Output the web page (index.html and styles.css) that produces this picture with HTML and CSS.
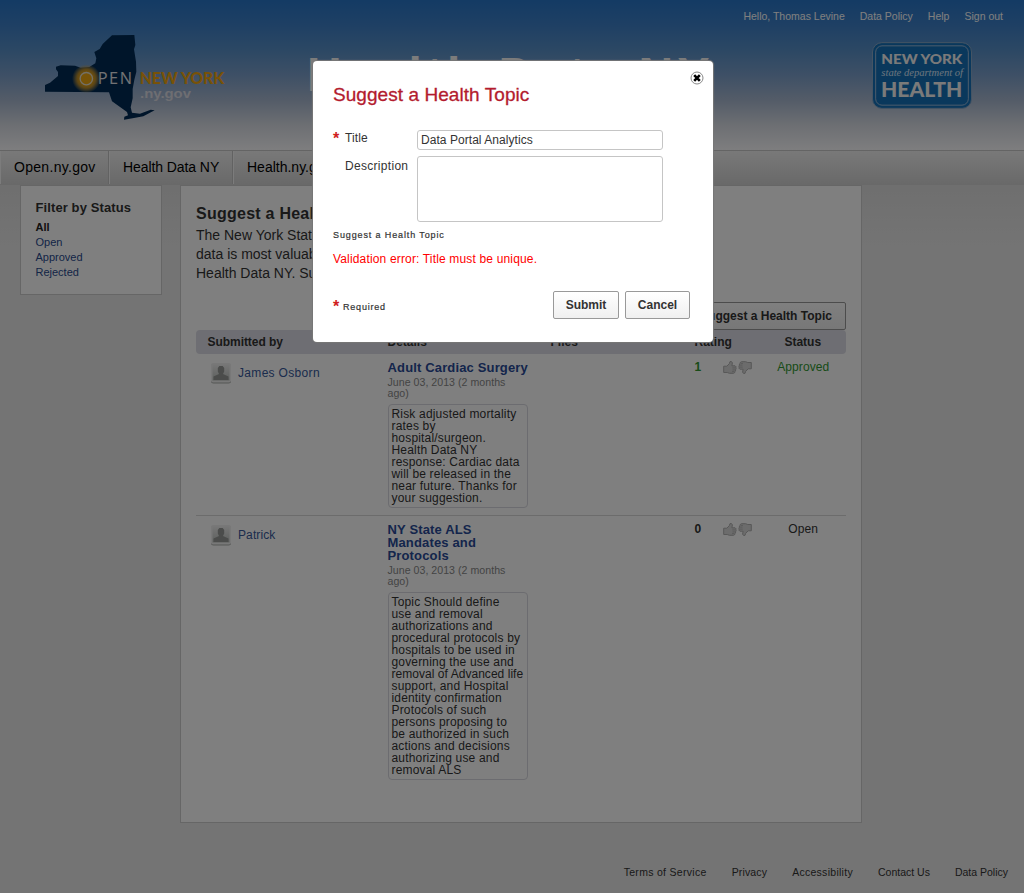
FILE: index.html
```html
<!DOCTYPE html>
<html lang="en">
<head>
<meta charset="utf-8">
<title>Suggest a Health Topic</title>
<link rel="stylesheet" href="styles.css">
</head>
<body>
<svg class="defs" width="0" height="0" aria-hidden="true">
  <symbol id="thumb" viewBox="0 0 14 13"><path d="M.7 5.2h3.1L6.3 2.7 7 .6h1.5l.9 1.2-.5 3h3.2l1.1 1.1-.5 1 .5 1-.8 1 .3 1-.9.7v.9l-1.2.8H6.4L4.2 11.5H.7z" fill="#d8d8d8" stroke="#b0b0b0"/><path d="M9.3 6.9h2.8M9.500 8.900h2.400M9 10.600h2.200" fill="none" stroke="#b8b8b8"/></symbol>
  <symbol id="person" viewBox="0 0 22 22"><rect x="1" y="2" width="20" height="19.500" rx="2.500" fill="#aaadaa"/><rect x="1" y="1" width="20" height="19.500" rx="2" fill="#f0f0f0"/><rect x="2.500" y="2.500" width="17" height="16" fill="url(#shade)"/><path d="M3.500 18v-3.500l5.500-2.500-1.200-2.500v-3.500l1.500-2h3.400l1.500 2v3.500l-1.200 2.500 5.500 2.500v3.500z" fill="#969996"/></symbol>
  <linearGradient id="shade" x2="0" y2="1"><stop stop-color="#eee"/><stop offset="1" stop-color="#bcc0bd"/></linearGradient>
</svg>
<div class="page">
  <header class="masthead">
    <svg class="state-logo" viewBox="0 0 630 330">
      <defs><radialGradient id="sun"><stop offset=".4" stop-color="#f0a810"/><stop offset=".65" stop-color="#c89428" stop-opacity=".9"/><stop offset="1" stop-color="#c8a050" stop-opacity="0"/></radialGradient></defs>
      <path d="M45 215V195L60 188 84 168V156L78 148V140L92 136 135 137 152 143 178 141 196 130 199 115 193 96 209 87 218 72 246 46 313 45 316 75 312 88 318 125 319 155 313 179 308 207V235L302 262 306 278 330 281 362 269 374 271 340 289 312 294 282 299 283 290 294 286 291 276 246 244 237 217z" fill="#002b54"/>
      <circle cx="169" cy="176" r="43" fill="url(#sun)"/><circle cx="169" cy="176" r="18.500" fill="none" stroke="#e4e0d0" stroke-width="4"/>
      <text x="203" y="193" class="logo-open" textLength="103">PEN</text>
      <text x="329" y="193" class="logo-ny" textLength="254" lengthAdjust="spacingAndGlyphs">NEW YORK</text>
      <text x="330" y="233" class="logo-gov" textLength="153" lengthAdjust="spacingAndGlyphs">.ny.gov</text>
    </svg>
    <h1 class="site-title">Health Data NY</h1>
    <div class="header-right">
      <nav class="user-links"><a>Hello, Thomas Levine</a><a>Data Policy</a><a>Help</a><a>Sign out</a></nav>
      <svg class="health-logo" viewBox="0 0 300 200">
        <rect x="1.500" y="1.500" width="297" height="197" rx="28" fill="#1470b8" stroke="#88a8c8" stroke-width="3"/>
        <rect x="11" y="11" width="278" height="178" rx="19" fill="none" stroke="#98b8d8" stroke-width="3"/>
        <text x="28" y="67" class="hl-top" textLength="243" lengthAdjust="spacingAndGlyphs">NEW YORK</text>
        <text x="28" y="101" class="hl-mid" textLength="245" lengthAdjust="spacingAndGlyphs">state department of</text>
        <text x="27" y="166" class="hl-bottom" textLength="244" lengthAdjust="spacingAndGlyphs">HEALTH</text>
      </svg>
    </div>
  </header>
  <nav class="main-nav"><a class="wide">Open.ny.gov</a><a class="data">Health Data NY</a><a>Health.ny.gov</a></nav>
  <div class="columns">
    <aside class="filter"><h2>Filter by Status</h2><strong>All</strong><a>Open</a><a>Approved</a><a>Rejected</a></aside>
    <main class="panel">
      <h2>Suggest a Health Topic</h2>
      <p class="intro">The New York State Department of Health would like to know what<br>data is most valuable to you. Suggest a topic to be published on<br>Health Data NY. Suggestions are reviewed by our staff.</p>
      <div class="actions"><button class="button suggest">Suggest a Health Topic</button></div>
      <div class="grid head"><b class="who-h">Submitted by</b><b>Details</b><b>Files</b><b>Rating</b><b class="status">Status</b></div>
      <div class="grid row first">
        <div class="who"><svg><use href="#person"/></svg><a>James Osborn</a></div>
        <div class="details"><h3>Adult Cardiac Surgery</h3><small>June 03, 2013 (2 months<br>ago)</small><p class="risk">Risk adjusted mortality<br>rates by<br>hospital/surgeon.<br>Health Data NY<br>response: Cardiac data<br>will be released in the<br>near future. Thanks for<br>your suggestion.</p></div>
        <span></span>
        <div class="rating good"><b>1</b><svg><use href="#thumb"/></svg><svg class="down"><use href="#thumb"/></svg></div>
        <div class="status good">Approved</div>
      </div>
      <div class="grid row">
        <div class="who"><svg><use href="#person"/></svg><a class="short">Patrick</a></div>
        <div class="details"><h3>NY State ALS<br>Mandates and<br>Protocols</h3><small>June 03, 2013 (2 months<br>ago)</small><p>Topic Should define<br>use and removal<br>authorizations and<br>procedural protocols by<br>hospitals to be used in<br>governing the use and<br><span class="tight">removal of Advanced life</span><br>support, and Hospital<br>identity confirmation<br>Protocols of such<br>persons proposing to<br>be authorized in such<br>actions and decisions<br>authorizing use and<br>removal ALS</p></div>
        <span></span>
        <div class="rating"><b>0</b><svg><use href="#thumb"/></svg><svg class="down"><use href="#thumb"/></svg></div>
        <div class="status">Open</div>
      </div>
    </main>
  </div>
  <footer class="footer"><a class="terms">Terms of Service</a><a class="privacy">Privacy</a><a class="access">Accessibility</a><a>Contact Us</a><a>Data Policy</a></footer>
</div>
<div class="overlay">
  <form class="modal">
    <svg class="close" viewBox="0 0 14 14"><circle cx="7" cy="7" r="6" fill="#fff" stroke="#888"/><path d="M4.200 4.200l5.600 5.600M9.800 4.200l-5.600 5.600" stroke="#000" stroke-width="2.600"/></svg>
    <h2>Suggest a Health Topic</h2>
    <div class="field title-field"><span class="star">*</span><label for="title">Title</label><input id="title" value="Data Portal Analytics"></div>
    <div class="field"><span class="star"></span><label class="desc" for="desc">Description</label><textarea id="desc"></textarea></div>
    <div class="note">Suggest a Health Topic</div>
    <div class="error">Validation error: Title must be unique.</div>
    <div class="modal-foot"><span class="required"><span class="star">*</span>Required</span><button type="button" class="button submit">Submit</button><button type="button" class="button cancel">Cancel</button></div>
  </form>
</div>
</body>
</html>
```
FILE: styles.css
```css
* { box-sizing: border-box; }
body { margin: 0; font: 12px/12px "Liberation Sans", Arial, sans-serif; color: #333; background: #e8e8e8; overflow: hidden; }
h1, h2, h3, p { margin: 0; }
.defs { position: absolute; }
.page { height: 893px; display: flex; flex-direction: column; }

.masthead { height: 150px; display: flex; background: linear-gradient(#2876c8 0, #3d80c8 25px, #5890c8 50px, #7ca0cc 75px, #a8b8d0 100px, #dadee6 125px, #fcfcfe 150px); }
.state-logo { width: 210px; height: 110px; margin: 20px 0 0 30px; flex: none; }
.logo-open { font: 49px "Open Sans", sans-serif; fill: #e4e4e8; }
.logo-ny { font: 900 49px Lato, sans-serif; fill: #f0a410; }
.logo-gov { font: bold 37px "Liberation Sans", sans-serif; fill: #dcdce4; }
.site-title { margin: 48px 0 0 67px; width: 409px; flex: none; font: bold 48px/54px "Liberation Sans", sans-serif; letter-spacing: 4.5px; color: #f8f8f8; white-space: nowrap; }
.header-right { flex: 1; display: flex; flex-direction: column; }
.user-links { display: flex; gap: 15px; justify-content: flex-end; padding: 10px 21px 0 0; margin-left: -10px; font-size: 10.5px; color: #fff; white-space: nowrap; }
.health-logo { width: 100px; height: 67px; margin: 20px 0 0 156px; }
.hl-top { font: 900 42px Lato, sans-serif; fill: #f4f4f4; }
.hl-mid { font: italic 29px "Liberation Serif", serif; fill: #d8e8f8; }
.hl-bottom { font: 900 61px Lato, sans-serif; fill: #f4f4f4; }

.main-nav { height: 35px; flex: none; display: flex; border-top: 1px solid #c8c8c8; background: linear-gradient(#f2f2f2, #d2d2d2); font-size: 14px; line-height: 33px; color: #000; }
.main-nav a { padding: 0 14px 0 13px; border-left: 1px solid #f8f8f8; box-shadow: -1px 0 #c4c4c4; height: 33px; width: 124px; white-space: nowrap; }
.main-nav .wide { width: 109px; letter-spacing: .3px; }
.main-nav .data { letter-spacing: -.08px; }
.columns { display: flex; align-items: flex-start; gap: 18px; padding-left: 20px; background: linear-gradient(#dedede, #e8e8e8 60px); }
.filter, .panel { background: #fff; border: 1px solid #ccc; }
.filter { width: 142px; height: 110px; padding: 15px 15px 15px 14.5px; display: flex; flex-direction: column; font-size: 11px; line-height: 15px; color: #284a8e; }
.filter h2 { font-size: 13px; line-height: 14px; color: #333; letter-spacing: .1px; margin-bottom: 5px; white-space: nowrap; }
.filter strong { color: #222; }
.panel { width: 682px; height: 638px; padding: 18px 15px 0; }
.panel > h2 { font-size: 16px; line-height: 20px; letter-spacing: .25px; }
.intro { font-size: 14px; line-height: 19px; margin-top: 2px; }
.actions { display: flex; justify-content: flex-end; margin-top: 19px; }
.button { height: 28px; border: 1px solid #999; border-radius: 2px; background: linear-gradient(#fff, #f0f0f0); font: bold 12px/12px "Liberation Sans", sans-serif; color: #333; padding: 0; white-space: nowrap; }
.suggest { width: 160px; }
.grid { display: grid; grid-template-columns: 191.500px 163px 144px 65px 86.500px; white-space: nowrap; }
.head { height: 24px; line-height: 24px; background: #dcdde6; border-radius: 4px; }
.who-h { padding-left: 11.5px; letter-spacing: -.05px; }
.status { text-align: center; }
.row { align-items: start; padding-top: 7px; }
.first { height: 162px; border-bottom: 1px solid #d8d8d8; }
.who { display: flex; padding: 1px 0 0 14px; gap: 6px; align-items: center; color: #36589a; letter-spacing: .32px; }
.who svg { width: 22px; height: 22px; }
.short { letter-spacing: .1px; }
.details h3 { font-size: 13px; line-height: 13px; color: #284a98; letter-spacing: .15px; }
.details small { display: block; font-size: 10.6px; line-height: 11px; color: #888; margin: 3px 0 5px; letter-spacing: .03px; }
.details p { width: 140px; border: 1px solid #d8d8e0; border-radius: 4px; padding: 3px; letter-spacing: .17px; }
.details .risk { letter-spacing: .18px; }
.tight { letter-spacing: .04px; }
.rating { display: flex; align-items: flex-start; }
.rating b { width: 28px; }
.rating svg { width: 14px; height: 13px; margin-right: 1px; }
.rating .down { transform: rotate(180deg); }
.good { color: #309830; }
.row .status { letter-spacing: .1px; padding-left: 1px; }
.footer { display: flex; gap: 25px; justify-content: flex-end; margin: 43px 16px 0 0; font-size: 10.5px; }
.terms { letter-spacing: .3px; }
.privacy { letter-spacing: .15px; }
.access { letter-spacing: .28px; }

.overlay { position: absolute; inset: 0; background: rgba(0, 0, 0, .5); }
.modal { position: relative; width: 400px; height: 281px; margin: 61px 0 0 313px; padding: 22px 23px 0 20px; background: #fff; border-radius: 4px; box-shadow: 0 0 1px 1px #777; }
.close { position: absolute; width: 14px; height: 14px; left: 376.5px; top: 9.5px; }
.modal h2 { font-weight: normal; font-size: 19px; line-height: 24px; color: #b31b2e; -webkit-text-stroke: .3px #b31b2e; margin-bottom: 23px; letter-spacing: .06px; }
.field { display: flex; }
.title-field { margin-bottom: 6px; }
.star { width: 12px; color: #d02020; font-weight: bold; font-size: 16px; line-height: 20px; }
.field label { width: 72px; line-height: 16px; letter-spacing: .1px; }
.field .desc { padding-top: 2px; letter-spacing: .3px; }
.field .star { line-height: 18px; }
input, textarea { width: 246px; height: 20px; border: 1px solid #c5c5c5; border-radius: 3px; padding: 0 3px; font: 12px "Liberation Sans", sans-serif; color: #333; resize: none; outline: 0; background: #fff; letter-spacing: .05px; }
textarea { height: 66px; display: block; }
.note { font-size: 9px; line-height: 12px; letter-spacing: .88px; margin-top: 7px; -webkit-text-stroke: .2px #333; }
.error { color: #f00; line-height: 14px; letter-spacing: .16px; margin-top: 11px; }
.modal-foot { display: flex; margin-top: 25px; gap: 6px; }
.required { flex: 1; display: flex; align-items: center; font-size: 9px; letter-spacing: .8px; padding-top: 3px; -webkit-text-stroke: .2px #333; }
.required .star { width: 10px; letter-spacing: 0; line-height: 12px; -webkit-text-stroke: 0; }
.submit { width: 66px; }
.cancel { width: 65px; }
```
